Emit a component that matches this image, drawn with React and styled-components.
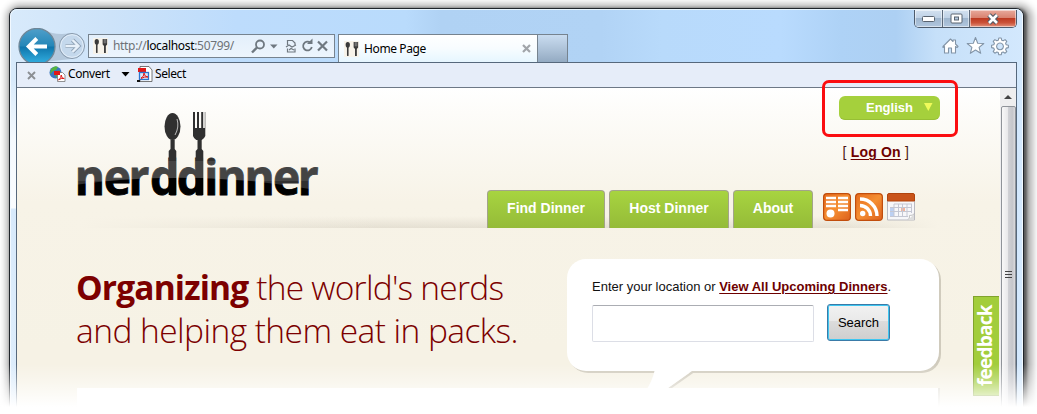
import React from "react";
import styled, { createGlobalStyle } from "styled-components";

const Global = createGlobalStyle`
  * { box-sizing: border-box; }
  body { margin: 0; background: #fff; }
`;

const Stage = styled.div`
  position: relative;
  width: 1037px;
  height: 414px;
  overflow: hidden;
  padding: 8px 13px 0 9px;
  background: #fff;
  font-family: "Liberation Sans", Arial, sans-serif;
`;

const Window = styled.div`
  display: flex;
  flex-direction: column;
  height: 440px;
  border: 1px solid #20252b;
  border-radius: 8px 8px 0 0;
  box-shadow: 2px 1px 3px 1px rgba(0, 0, 0, 0.5), 3px 2px 7px 6px rgba(0, 0, 0, 0.3);
  background: #bfdcf8;
`;

const Frame = styled.div`
  display: flex;
  flex-direction: column;
  flex: 1;
  min-height: 0;
  padding: 0 6px;
  border: 1px solid #f2f9ff;
  border-top: 1px solid #e8f5ff;
  border-radius: 7px 7px 0 0;
  background:
    linear-gradient(to bottom, rgba(255,255,255,0) 70px, rgba(255,255,255,.75) 130px, rgba(255,255,255,.85) 198px, rgba(255,255,255,0) 199px) left / 8px 100% no-repeat,
    linear-gradient(52deg, rgba(255,255,255,.12) 0 8%, transparent 14% 100%),
    linear-gradient(to right, #d8eafb 0, #cde3f9 100px, #bddcfc 225px, #b9dbfc 395px, #b0d2f4 430px, #b1d3f5 590px, #b8dafb 650px, #b9dbfe 770px, #aed2f6 830px, #add0f3 885px, #c6e0f9 925px, #d3e8fd 100%);
`;

const Caption = styled.div`
  display: flex;
  justify-content: flex-end;
  height: 18px;
  margin-right: -1px;
`;

const CaptionGroup = styled.div`
  display: flex;
  width: 103px;
  height: 18px;
  border: 1px solid #4d5b6c;
  border-top: 0;
  border-radius: 0 0 5px 5px;
  overflow: hidden;
`;

const CaptionButton = styled.div`
  display: flex;
  align-items: center;
  justify-content: center;
  width: ${(p) => p.$w}px;
  border-right: ${(p) => (p.$danger ? 0 : "1px solid #5c6a7b")};
  box-shadow: inset 0 0 0 1px rgba(255, 255, 255, 0.5);
  background: ${(p) =>
    p.$danger
      ? "linear-gradient(#e8aa9c 0, #d98370 45%, #bd3b22 50%, #cb5238 75%, #e3947f 100%)"
      : "linear-gradient(#d3e1f0 0, #c0d2e6 45%, #9fb6ce 50%, #b1c7df 100%)"};
`;

const NavRow = styled.div`
  display: flex;
  align-items: flex-start;
  height: 34px;
  padding-left: 1px;
  overflow: hidden;
`;

const BackForward = styled.svg`
  flex: none;
  width: 70px;
  height: 35px;
`;

const AddressBar = styled.div`
  display: flex;
  align-items: center;
  flex: none;
  width: 247px;
  height: 24px;
  margin-top: 6px;
  padding: 0 6px 0 4px;
  border: 1px solid #76838f;
  background: linear-gradient(#e3effb, #edf5fd);
`;

const FavIcon = styled.svg`
  flex: none;
  width: 15px;
  height: 16px;
  background: #f7f3ea;
`;

const Address = styled.div`
  flex: 1;
  margin-left: 5px;
  font: 12px/20px "Noto Sans", sans-serif;
  letter-spacing: -0.32px;
  color: #6d7277;
  white-space: nowrap;
  b { font-weight: 400; color: #000; }
`;

const AddressTools = styled.svg`
  flex: none;
  width: 78px;
  height: 16px;
`;

const Tab = styled.div`
  display: flex;
  align-items: center;
  flex: none;
  width: 200px;
  height: 28px;
  margin: 6px 0 0 3px;
  padding: 0 6px 0 5px;
  border: 1px solid #76838f;
  border-bottom: 0;
  background: linear-gradient(#fff 0, #f7fcff 50%, #e6f6ff 100%);
`;

const TabTitle = styled.div`
  flex: 1;
  margin-left: 5px;
  font: 12px/20px "Noto Sans", sans-serif;
  letter-spacing: -0.38px;
  color: #000;
`;

const NewTab = styled.div`
  flex: none;
  width: 30px;
  height: 28px;
  margin-top: 6px;
  border: 1px solid #76838f;
  border-width: 1px 1px 0 0;
  background: linear-gradient(#c9dcf0 0, #aabfd5 60%, #93aac2 100%);
`;

const ChromeTools = styled.svg`
  flex: none;
  width: 68px;
  height: 20px;
  margin: 8px 7px 0 auto;
`;

const Client = styled.div`
  display: flex;
  flex-direction: column;
  flex: 1;
  min-height: 0;
  margin: 0 -1px;
  border: 1px solid #56687c;
  border-bottom: 0;
  background: #fff;
`;

const Toolbar = styled.div`
  display: flex;
  align-items: center;
  flex: none;
  height: 25px;
  padding: 0 0 2px 10px;
  border-bottom: 1px solid #6d7886;
  background: #e6edf9;
  font: 12px/18px "Noto Sans", sans-serif;
  letter-spacing: -0.4px;
  color: #000;
`;

const ToolIcon = styled.svg`
  flex: none;
  width: ${(p) => p.$w}px;
  height: ${(p) => p.$h || 16}px;
  margin-left: ${(p) => p.$ml || 0}px;
`;

const ToolLabel = styled.span`
  width: ${(p) => p.$w}px;
  margin-left: 2px;
  white-space: nowrap;
`;

const Viewport = styled.div`
  display: flex;
  flex: 1;
  min-height: 0;
`;

const Page = styled.div`
  position: relative;
  width: 983px;
  padding: 0 61px 0 60px;
  background: linear-gradient(#fff 0, #fdfcf9 25px, #f7f3e7 115px, #f6f2e5 260px);
`;

const Header = styled.header`
  display: flex;
  justify-content: space-between;
  height: 140px;
  background:
    linear-gradient(to right, #f7f3e7 0, transparent 35% 88%, #f7f3e7 100%) bottom / 100% 12px no-repeat,
    linear-gradient(rgba(214,208,194,0), rgba(214,208,194,.55)) bottom / 100% 12px no-repeat;
`;

const Logo = styled.svg`
  flex: none;
  width: 250px;
  height: 100px;
  margin-top: 17px;
  overflow: visible;
`;

const HeaderSide = styled.div`
  display: flex;
  flex-direction: column;
  align-items: flex-end;
  width: 452px;
`;

const Language = styled.div`
  display: flex;
  align-items: center;
  width: 101px;
  height: 24px;
  margin: 8px -1px 0 0;
  padding: 0 7px 0 27px;
  border-radius: 6px;
  border-bottom: 1px solid #97bf35;
  background: #a5d03c;
  color: #fff;
  font-size: 13px;
  font-weight: 700;
  justify-content: space-between;
`;

const LogOn = styled.div`
  margin: 23px 30px 0 0;
  font-size: 14px;
  line-height: 18px;
  letter-spacing: 0.2px;
  color: #4b1513;
`;

const Link = styled.a`
  font-weight: 700;
  color: #6d0000;
  text-decoration: underline;
  text-underline-offset: 2px;
  text-decoration-thickness: 1px;
`;

const Menu = styled.nav`
  display: flex;
  gap: 4px;
  width: 452px;
  margin-top: auto;
`;

const MenuTab = styled.div`
  width: ${(p) => p.$w}px;
  height: 38px;
  border: 1px solid #a3a48a;
  border-bottom: 0;
  border-radius: 4px 4px 0 0;
  background: linear-gradient(#a7d440, #95bb38);
  color: #fff;
  font-size: 14px;
  font-weight: 700;
  line-height: 35px;
  text-align: center;
  white-space: nowrap;
`;

const MenuIcon = styled.svg`
  flex: none;
  width: 28px;
  height: 28px;
  margin-top: 3px;
  margin-left: ${(p) => p.$ml || 0}px;
`;

const Hero = styled.section`
  display: flex;
  justify-content: space-between;
  height: 160px;
`;

const Tagline = styled.h1`
  width: 470px;
  margin: 38px 0 0 -1px;
  font: 300 33.5px/43px "Open Sans", sans-serif;
  color: #7c0000;
  white-space: nowrap;
`;

const TagLineRow = styled.span`
  display: block;
  letter-spacing: ${(p) => p.$ls}px;
  b { font-weight: 700; letter-spacing: ${(p) => p.$bold}px; }
`;

const BubbleWrap = styled.div`
  width: 372px;
  padding-top: 31px;
`;

const Bubble = styled.div`
  height: 112px;
  padding: 19px 25px;
  border-radius: 19px;
  background: #fff;
  box-shadow: 2px 2px 0 #d0cbbd;
`;

const Prompt = styled.div`
  font-size: 13px;
  line-height: 18px;
  color: #111;
  white-space: nowrap;
`;

const SearchRow = styled.div`
  display: flex;
  gap: 13px;
  margin-top: 8px;
`;

const SearchField = styled.div`
  width: 222px;
  height: 37px;
  margin-top: 1px;
  border: 1px solid #dcdee6;
  border-top-color: #abadb3;
  border-radius: 2px;
  background: #fff;
`;

const SearchButton = styled.div`
  width: 63px;
  height: 37px;
  border: 1px solid #3a7ba8;
  border-radius: 3px;
  box-shadow: inset 0 0 0 1px #3fc6f0;
  background: linear-gradient(#f2f2f2 0, #e9e9e9 46%, #dcdcdc 47%, #cecece 100%);
  font-size: 13px;
  line-height: 36px;
  text-align: center;
  color: #000;
`;

const TailRow = styled.div`
  position: relative;
  height: 17px;
  padding-left: 75px;
`;

const Tail = styled.svg`
  display: block;
  width: 60px;
  height: 17px;
`;

const Main = styled.main`
  height: 80px;
  margin-right: 1px;
  background: #fff;
  box-shadow: 2px 0 0 #dedbd2;
`;

const Feedback = styled.div`
  position: absolute;
  top: 208px;
  right: 1px;
  width: 26px;
  height: 100px;
  border: 1px solid #81a32c;
  border-left: 0;
  background: #a2cd3b;
  color: #fff;
  font: 700 19px/23px "Open Sans", sans-serif;
  letter-spacing: -0.75px;
  text-align: center;
  writing-mode: vertical-rl;
  transform: rotate(180deg);
`;

const ScrollBar = styled.div`
  display: flex;
  flex-direction: column;
  align-items: center;
  flex: 1;
  background: #eeeeef;
`;

const ScrollArrow = styled.svg`
  flex: none;
  width: 16px;
  height: 18px;
`;

const Thumb = styled.div`
  display: flex;
  flex-direction: column;
  align-items: center;
  gap: 2px;
  width: 15px;
  flex: 1;
  padding-top: 164px;
  border: 1px solid #8f9399;
  border-radius: 2px 2px 0 0;
  background: linear-gradient(to right, #f8f8f8 0, #e8e8ea 45%, #cfd0d4 50%, #c5c6cb 80%, #dadadd 100%);
`;

const Grip = styled.i`
  width: 7px;
  height: 1px;
  background: #444;
`;

const Highlight = styled.div`
  position: absolute;
  left: 822px;
  top: 80px;
  width: 136px;
  height: 57px;
  border: 3px solid #fb0d10;
  border-radius: 7px;
`;

const Fade = styled.div`
  position: absolute;
  left: 0;
  right: 0;
  bottom: 0;
  height: 50px;
  background: linear-gradient(rgba(255,255,255,0), rgba(255,255,255,.35) 35%, #fff 86%);
`;

function Cutlery() {
  return (
    <FavIcon viewBox="0 0 14 15">
      <ellipse cx="3.5" cy="3.6" rx="2" ry="2.7" fill="#3a3a3a" />
      <path d="M3.5 5v9" stroke="#3a3a3a" strokeWidth="1.5" />
      <path d="M9 1h4.2v5L12 7.500V14h-1.700V7.500L9 6z" fill="#3a3a3a" />
      <path d="M10.500 1v4M12 1v4" stroke="#ccc" strokeWidth=".5" />
    </FavIcon>
  );
}

function BackForwardArt() {
  return (
    <BackForward viewBox="0 0 70 35">
      <defs>
        <linearGradient id="back" x1="0" y1="0" x2="0" y2="1">
          <stop offset="0" stopColor="#4f9fca" />
          <stop offset=".48" stopColor="#2587b8" />
          <stop offset=".52" stopColor="#0f76ac" />
          <stop offset="1" stopColor="#35b2e4" />
        </linearGradient>
      </defs>
      <path d="M26 2 Q38 8 53 5 L53 31 L26 34z" fill="#a9bdd2" opacity=".75" />
      <circle cx="19" cy="18.5" r="18" fill="url(#back)" stroke="#6f8798" strokeWidth="1.3" />
      <path d="M29 18.500H11M18.800 10.500l-8 8 8 8" fill="none" stroke="#fff" strokeWidth="4" />
      <circle cx="54" cy="18" r="12.500" fill="#c4d8ec" stroke="#8798aa" />
      <circle cx="54" cy="18" r="11.300" fill="none" stroke="#e3eef9" />
      <path d="M47.500 18H59M54.500 12l6 6-6 6" fill="none" stroke="#8fa2b6" strokeWidth="4.200" />
      <path d="M47.500 18H59M54.500 12l6 6-6 6" fill="none" stroke="#e8f1fa" strokeWidth="2.400" />
    </BackForward>
  );
}

function LogoArt() {
  return (
    <Logo viewBox="77 105 250 100">
      <defs>
        <pattern id="gloss" patternUnits="userSpaceOnUse" x="0" y="0" width="400" height="220">
          <rect width="400" height="220" fill="#303030" />
          <rect y="161" width="400" height="20" fill="#444" />
          <path d="M70 186 Q200 168 330 189 V220 H70z" fill="#000" />
        </pattern>
      </defs>
      <g fill="url(#gloss)">
        <text
          transform="scale(.94 1)"
          y="195"
          x="79.400 110.400 136.800 159.700 188 217.400 230.300 260 290.400 316.800"
          fontFamily="'Open Sans', sans-serif"
          fontWeight="700"
          fontSize="49"
          stroke="url(#gloss)"
          strokeWidth=".8"
        >nerddinner</text>
        <path d="M168.700 151l1.800-2v-9.500h4.200v9.500l1.600 2v44h-7.600z" />
        <path d="M195.700 151l1.800-2v-9.500h4.200v9.500l1.600 2v44h-7.600z" />
        <ellipse cx="172.500" cy="126.500" rx="8" ry="13.500" />
        <path d="M193 112h2v16h2v-16h2v16h2.200v-16h2v16h1.600v-16h.5v24q-1 2.500-3.500 4h-5.500q-2.500-1.500-3.300-4z" />
      </g>
      <path d="M177 119q2.500 8-2 16" fill="none" stroke="#bbb" strokeWidth="1" />
    </Logo>
  );
}

export default function App() {
  return (
    <Stage>
      <Global />
      <Window>
        <Frame>
          <Caption>
            <CaptionGroup>
              <CaptionButton $w={28}>
                <svg width="13" height="6"><rect x=".5" y=".5" width="12" height="5" rx="1" fill="#fff" stroke="#5a6470" /></svg>
              </CaptionButton>
              <CaptionButton $w={27}>
                <svg width="13" height="11"><rect x="1" y="1" width="11" height="9" rx="1" fill="#fff" stroke="#5a6470" /><rect x="4.500" y="4" width="4" height="3" fill="#b5c9de" stroke="#5a6470" /></svg>
              </CaptionButton>
              <CaptionButton $w={46} $danger>
                <svg width="14" height="12" viewBox="0 0 14 12"><path d="M3 2l8 8M11 2l-8 8" stroke="#515a66" strokeWidth="4.800" /><path d="M3 2l8 8M11 2l-8 8" stroke="#fff" strokeWidth="2.600" /></svg>
              </CaptionButton>
            </CaptionGroup>
          </Caption>
          <NavRow>
            <BackForwardArt />
            <AddressBar>
              <Cutlery />
              <Address>http://<b>localhost</b>:50799/</Address>
              <AddressTools viewBox="0 0 78 16" fill="none" stroke="#6f7880" strokeWidth="1.800">
                <circle cx="10" cy="6.500" r="4" /><path d="M7 9.500l-5 5" strokeWidth="2.400" />
                <path d="M20 6.500h7.500l-3.700 4z" fill="#6f7880" stroke="none" />
                <path d="M37.500 7V2.500h5l2.500 2.500v2M37.500 10.500v3.500h7.500v-3.500M36 9l3-2 3 2 4-2M39 12l2-1.500 3 1.500" strokeWidth="1.200" />
                <path d="M60.500 4.800a4.400 4.400 0 1 0 1.300 4.200" /><path d="M57 6h5.500V.5z" fill="#6f7880" stroke="none" />
                <path d="M68 3.500l9 9M77 3.500l-9 9" strokeWidth="2.200" />
              </AddressTools>
            </AddressBar>
            <Tab>
              <Cutlery />
              <TabTitle>Home Page</TabTitle>
              <svg width="9" height="9"><path d="M1 1l7 7M8 1l-7 7" stroke="#a1a5aa" strokeWidth="2.200" /></svg>
            </Tab>
            <NewTab />
            <ChromeTools viewBox="0 0 68 20" fill="#fff" stroke="#8294a7" strokeWidth="1.100" strokeLinejoin="round">
              <path d="M2 10.500L9.500 3l2.500 2.500V4h2.500v4l2.500 2.500-1 1-1.500-1V17h-4v-5h-3v5h-4v-6.500l-1.500 1z" />
              <path d="M34.500 1.500l2.200 5.700 6.100.3-4.700 3.900 1.600 5.900-5.200-3.300-5.200 3.300 1.600-5.900-4.700-3.900 6.100-.3z" />
              <path fillRule="evenodd" d="M57.800 2h2.400l.5 2.200 1.500.6 1.900-1.200 1.700 1.700-1.200 1.900.6 1.500 2.200.5v2.400l-2.200.5-.6 1.500 1.200 1.900-1.700 1.700-1.900-1.200-1.500.6-.5 2.200h-2.400l-.5-2.200-1.500-.6-1.900 1.200-1.700-1.700 1.200-1.900-.6-1.500-2.200-.5V9.200l2.200-.5.6-1.500-1.200-1.900 1.700-1.700 1.900 1.200 1.500-.6zM59 7a3.400 3.400 0 1 0 .01 0z" />
            </ChromeTools>
          </NavRow>
          <Client>
            <Toolbar>
              <ToolIcon $w={9} $h={11} viewBox="0 0 9 11"><path d="M1 3l7 7M8 3l-7 7" stroke="#8c8f94" strokeWidth="1.900" /></ToolIcon>
              <ToolIcon $w={17} $ml={13} viewBox="0 0 17 16">
                <circle cx="6.500" cy="6.500" r="6" fill="#3a78c0" />
                <path d="M2 3q4-4 7-2l-2 3-3 1-3 3zM6 8l4-4 2 4-4 4z" fill="#55b43f" />
                <path d="M8.500 6.500h5l2.500 2.500v6.500H8.500z" fill="#fff" stroke="#777" strokeWidth=".8" />
                <rect x="5" y="5" width="6" height="4" fill="#e01818" />
                <path d="M9.500 14q3-2 2.700-5q.5 4 3 3.500q-3-.7-5.700 1.500" fill="none" stroke="#e01818" />
              </ToolIcon>
              <ToolLabel $w={51}>Convert</ToolLabel>
              <ToolIcon $w={9} $h={5} $ml={2} viewBox="0 0 9 5"><path d="M.5 0h8l-4 4.500z" fill="#000" /></ToolIcon>
              <ToolIcon $w={16} $ml={7} viewBox="0 0 16 16">
                <path d="M3 .5h9L15 4v11.500H3z" fill="#fff" stroke="#555" strokeWidth=".8" />
                <rect x="1" y="2" width="8" height="4" fill="#e01818" />
                <rect x="2.500" y="6.500" width="9" height="7" fill="#dce9fa" stroke="#2d74cf" strokeWidth="1.300" />
                <path d="M4 12q3-1 3-5q.5 4 4 4q-3-.7-7 1.500" fill="none" stroke="#e01818" />
                <path d="M0 14h3v2H0z" fill="#111" />
              </ToolIcon>
              <ToolLabel $w={40}>Select</ToolLabel>
            </Toolbar>
            <Viewport>
              <Page>
                <Header>
                  <LogoArt />
                  <HeaderSide>
                    <Language>English<svg width="9" height="10"><path d="M0 0h8.500L4.300 8z" fill="#f0fa5a" /></svg></Language>
                    <LogOn>[ <Link>Log On</Link> ]</LogOn>
                    <Menu>
                      <MenuTab $w={118}>Find Dinner</MenuTab>
                      <MenuTab $w={120}>Host Dinner</MenuTab>
                      <MenuTab $w={80}>About</MenuTab>
                      <MenuIcon $ml={6} viewBox="0 0 28 28">
                        <defs><linearGradient id="orange" x1="0" y1="0" x2="1" y2="1"><stop offset="0" stopColor="#e66b1c" /><stop offset=".5" stopColor="#f58f32" /><stop offset="1" stopColor="#dd601c" /></linearGradient></defs>
                        <rect x=".6" y=".6" width="26.800" height="26.800" rx="3.500" fill="url(#orange)" stroke="#c14d0c" strokeWidth="1.200" />
                        <path d="M3 5h10M3 9h10M3 13h10M15 5h10M15 9h10M15 13h10M15 17h10" stroke="#fff" strokeWidth="2.300" />
                        <circle cx="7.500" cy="20.500" r="4" fill="#fff" />
                      </MenuIcon>
                      <MenuIcon viewBox="0 0 28 28">
                        <rect x=".6" y=".6" width="26.800" height="26.800" rx="3.500" fill="url(#orange)" stroke="#c14d0c" strokeWidth="1.200" />
                        <circle cx="7.700" cy="20.500" r="2.700" fill="#fff" />
                        <path d="M5 12.500a10.500 10.500 0 0 1 10.500 10.500M5 6a17 17 0 0 1 17 17" fill="none" stroke="#fff" strokeWidth="3.400" />
                      </MenuIcon>
                      <MenuIcon viewBox="0 0 28 28">
                        <path d="M.5 7h27v20H.5z" fill="#f7f7fa" stroke="#b9b9c0" />
                        <path d="M.5 8V2Q.5.500 2 .500h24q1.500 0 1.500 1.500v6z" fill="#c9541a" stroke="#b0440e" />
                        <path d="M3 15h4v9H3z" fill="#bcd0f3" />
                        <path d="M14 14h4v4h-4z" fill="#f3b39c" />
                        <path d="M3 14.500h22M3 18.500h22M3 23.500h18M7 11v13M11.500 11v13M15.500 11v13M20 11v13M24.500 11v9M7 11h18" fill="none" stroke="#c5c7d3" />
                        <path d="M21 27l6-6v6z" fill="#ddd" />
                        <path d="M21 26.500q2-1 1.500-4 3 .3 5-2" fill="#fff" stroke="#aaa" strokeWidth=".7" />
                      </MenuIcon>
                    </Menu>
                  </HeaderSide>
                </Header>
                <Hero>
                  <Tagline>
                    <TagLineRow $ls={-0.76} $bold={-0.85}><b>Organizing</b> the world's nerds</TagLineRow>
                    <TagLineRow $ls={-0.55}>and helping them eat in packs.</TagLineRow>
                  </Tagline>
                  <BubbleWrap>
                    <Bubble>
                      <Prompt>Enter your location or <Link>View All Upcoming Dinners</Link>.</Prompt>
                      <SearchRow>
                        <SearchField />
                        <SearchButton>Search</SearchButton>
                      </SearchRow>
                    </Bubble>
                    <TailRow>
                      <Tail viewBox="0 0 60 17">
                        <path d="M26 17L50 0h4L30 17z" fill="#d0cbbd" />
                        <path d="M12.500 0H50L26 17H5.500Q10 10 12.500 0z" fill="#fff" />
                      </Tail>
                    </TailRow>
                  </BubbleWrap>
                </Hero>
                <Main />
                <Feedback>feedback</Feedback>
              </Page>
              <ScrollBar>
                <ScrollArrow viewBox="0 0 16 18"><path d="M4 11h8l-4-4z" fill="#444" /></ScrollArrow>
                <Thumb><Grip /><Grip /><Grip /></Thumb>
              </ScrollBar>
            </Viewport>
          </Client>
        </Frame>
      </Window>
      <Highlight />
      <Fade />
    </Stage>
  );
}
